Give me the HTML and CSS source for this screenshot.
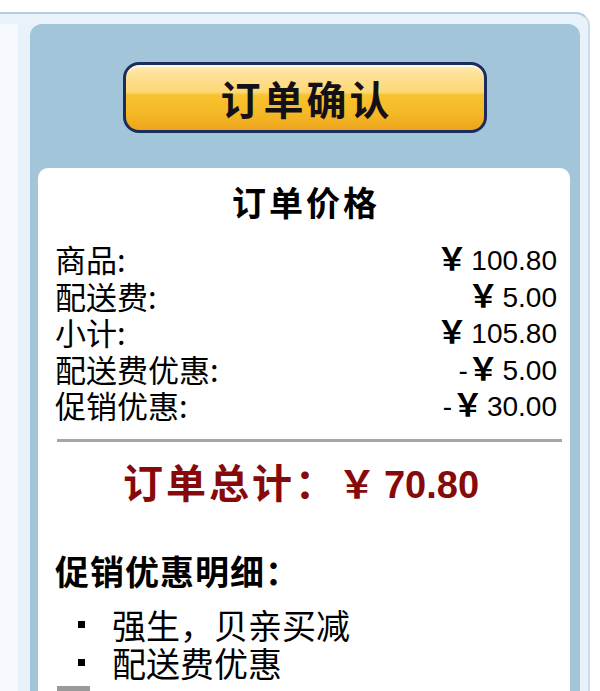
FILE: index.html
```html
<!DOCTYPE html>
<html lang="zh-CN">
<head>
 <meta charset="UTF-8">
 <meta name="viewport" content="width=device-width, initial-scale=1.0">
 <title>订单确认</title>
 <link rel="stylesheet" href="styles.css">
</head>
<body>
<div class="frame">
 <div class="side"></div>
 <div class="panel">
   <div class="confirm-row">
     <button class="confirm">订单确认</button>
   </div>
   <div class="card">
     <h3 class="card-title">订单价格</h3>
     <div class="prices">
       <div class="price-row"><span>商品:</span><span class="amount"><b class="yen">￥</b> 100.80</span></div>
       <div class="price-row"><span>配送费:</span><span class="amount"><b class="yen">￥</b> 5.00</span></div>
       <div class="price-row"><span>小计:</span><span class="amount"><b class="yen">￥</b> 105.80</span></div>
       <div class="price-row"><span>配送费优惠:</span><span class="amount">-<b class="yen">￥</b> 5.00</span></div>
       <div class="price-row"><span>促销优惠:</span><span class="amount">-<b class="yen">￥</b> 30.00</span></div>
     </div>
     <div class="divider"></div>
     <div class="total"><span class="total-label">订单总计：</span><span class="total-yen">￥</span><span class="total-num">70.80</span></div>
     <h4 class="promo-title">促销优惠明细：</h4>
     <ul class="promo-list">
       <li>强生，贝亲买减</li>
       <li>配送费优惠</li>
     </ul>
     <div class="stub"></div>
   </div>
 </div>
</div>
</body>
</html>
```

FILE: styles.css
```css
body {
  margin: 0;
  padding: 0;
  background-color: #ffffff;
  font-family: "Noto Sans CJK SC", "Liberation Sans", sans-serif;
  color: #000000;
  overflow: hidden;
}
.frame {
  display: flex;
  width: 580px;
  height: 667px;
  margin-top: 12px;
  padding: 10px 8px 0 0;
  background-color: #e8f2fb;
  border-top: 2px solid #b8ccdd;
  border-right: 2px solid #cddcea;
  border-top-right-radius: 14px;
}
.side {
  width: 18px;
  margin-right: 12px;
  background-color: #f6faff;
}
.panel {
  flex: 1;
  display: flex;
  flex-direction: column;
  padding-top: 38px;
  background-color: #a3c5da;
  border-radius: 12px 12px 0 0;
}
.confirm-row {
  display: flex;
  justify-content: center;
  margin-bottom: 35px;
}
.confirm {
  width: 364px;
  height: 71px;
  padding: 0 0 0 3px;
  border: 3px solid #1c2c5c;
  border-radius: 16px;
  background: linear-gradient(to bottom, #fff0c0 0%, #fde29a 12%, #fcd774 42%, #f8c32e 46%, #f5b826 75%, #eea41c 100%);
  box-shadow: inset 0 2px 0 rgba(255, 255, 255, 0.6);
  font-family: "Noto Sans CJK SC", sans-serif;
  font-size: 40px;
  font-weight: bold;
  letter-spacing: 3px;
  line-height: 1;
  color: #141018;
  cursor: pointer;
}
.card {
  flex: 1;
  overflow: hidden;
  margin: 0 10px 0 8px;
  padding: 14px 13px 0 17px;
  background-color: #ffffff;
  border-radius: 10px 10px 0 0;
}
.card-title {
  margin: 0 0 19px;
  text-align: center;
  font-size: 34px;
  font-weight: bold;
  letter-spacing: 3px;
  line-height: 40px;
}
.price-row {
  display: flex;
  justify-content: space-between;
  align-items: center;
  height: 36.5px;
  font-size: 31px;
  line-height: 36.5px;
}
.amount {
  font-family: "Liberation Sans", Arial, sans-serif;
  font-size: 28px;
}
.yen {
  font-family: "Noto Sans CJK SC", sans-serif;
  font-size: 31px;
  margin-right: -4px;
}
.divider {
  height: 3px;
  margin: 15px -5px 0 2px;
  background-color: #a6a6a6;
}
.total {
  margin-top: 14px;
  height: 50px;
  line-height: 50px;
  text-align: center;
  color: #870a0a;
  font-weight: bold;
}
.total-label {
  margin-left: -10px;
  font-size: 40px;
  letter-spacing: 3px;
}
.total-yen {
  font-size: 38px;
  margin-right: 8px;
}
.total-num {
  font-family: "Liberation Sans", Arial, sans-serif;
  font-size: 38px;
}
.promo-title {
  margin: 45px 0 0 0;
  font-size: 34px;
  font-weight: bold;
  letter-spacing: 1px;
  line-height: 40px;
}
.promo-list {
  list-style: none;
  margin: 15px 0 0;
  padding: 0;
}
.promo-list li {
  display: flex;
  align-items: center;
  font-size: 34px;
  line-height: 38px;
}
.promo-list li::before {
  content: "";
  width: 7px;
  height: 7px;
  margin: 0 27px 0 23px;
  background-color: #000000;
}
.stub {
  width: 33px;
  height: 5px;
  margin: 4px 0 0 2px;
  background-color: #9a9a9a;
}
```
